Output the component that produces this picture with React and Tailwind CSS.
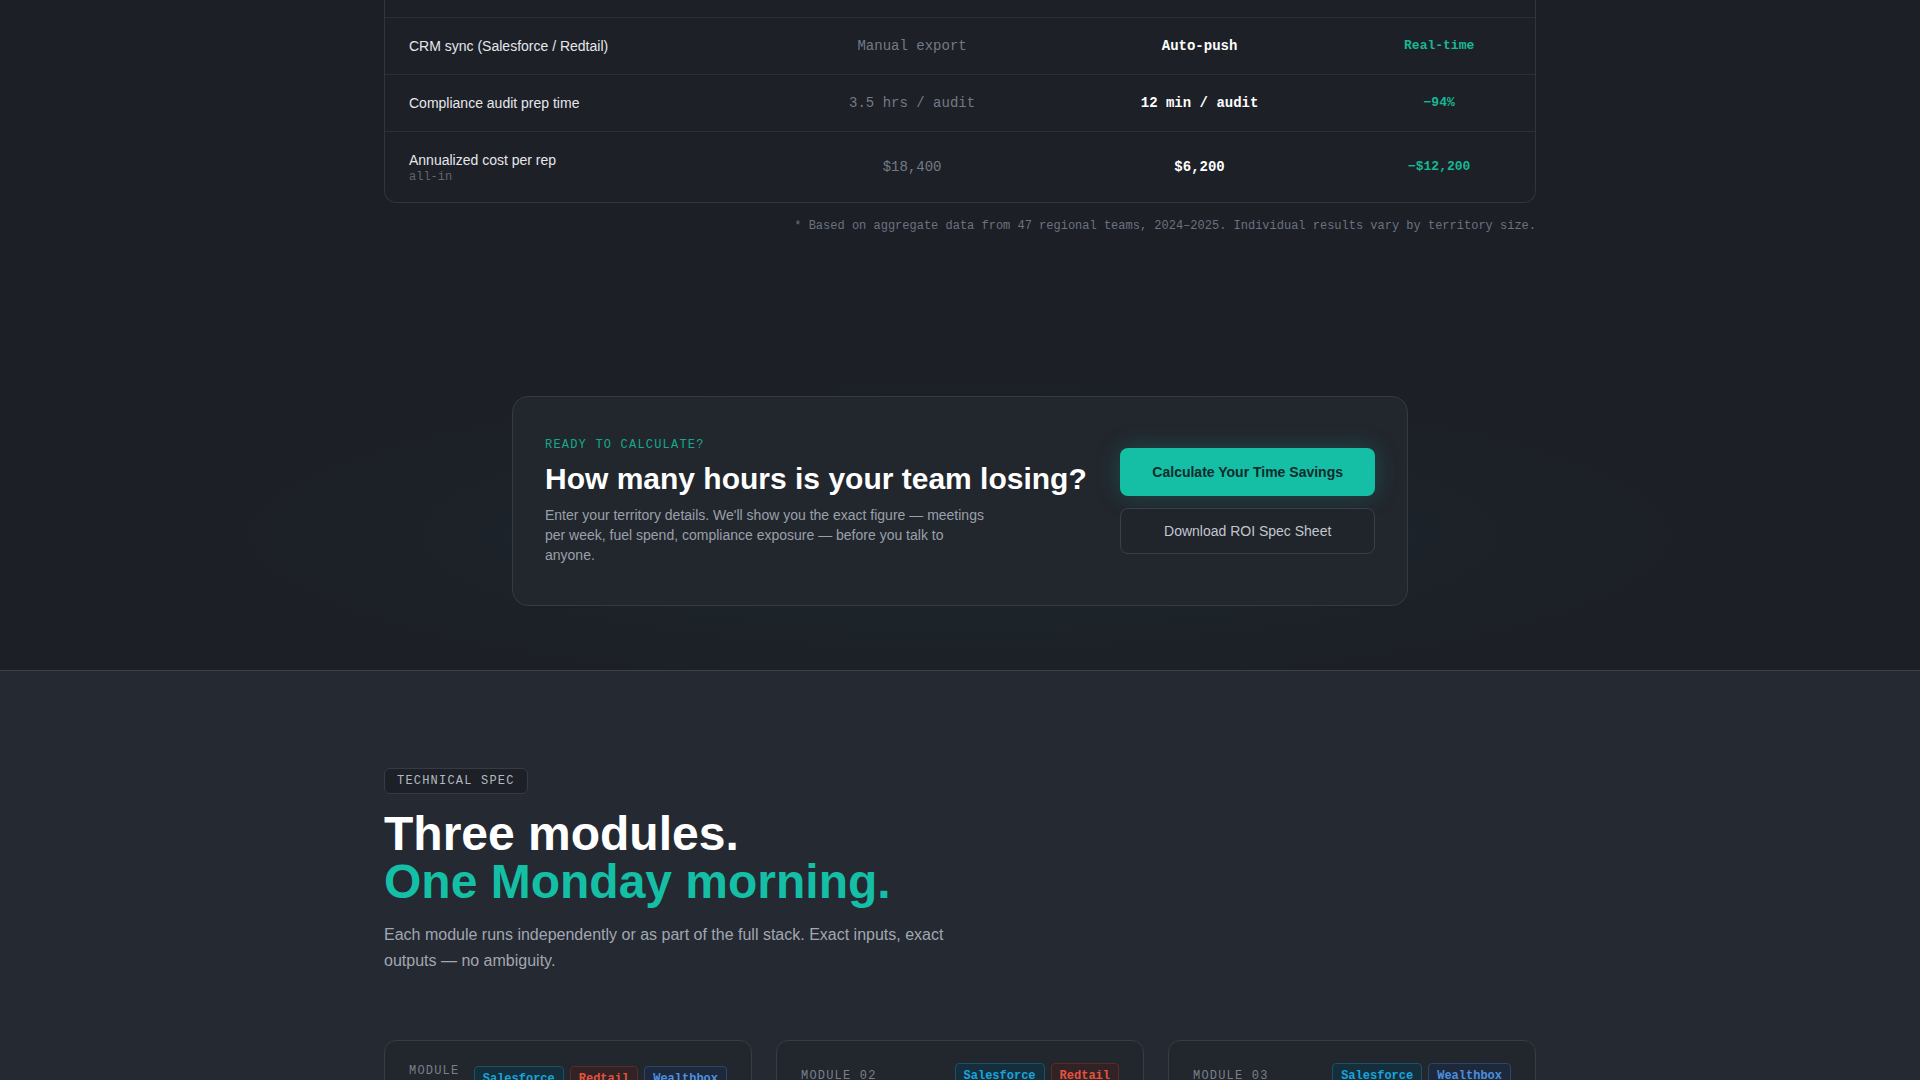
import React from 'react'

const ROWS = [
  { label: 'CRM sync (Salesforce / Redtail)', before: 'Manual export', after: 'Auto-push', delta: 'Real-time' },
  { label: 'Compliance audit prep time', before: '3.5 hrs / audit', after: '12 min / audit', delta: '−94%' },
  { label: 'Annualized cost per rep', sub: 'all-in', before: '$18,400', after: '$6,200', delta: '−$12,200' },
]

const TAGS = {
  Salesforce: 'text-[#1aa3dc] bg-[#0e3345]/60 border-[#1a5068]',
  Redtail: 'text-[#e5533d] bg-[#3a1f1f]/60 border-[#5e2a28]',
  Wealthbox: 'text-[#4d8fe0] bg-[#1b2b44]/60 border-[#2c466b]',
}

const MODULES = [
  { num: '01', tags: ['Salesforce', 'Redtail', 'Wealthbox'], title: 'Route Optimizer', desc: 'Clusters appointments by geography and drive time.' },
  { num: '02', tags: ['Salesforce', 'Redtail'], title: 'Meeting Scheduler', desc: 'Books client meetings into optimized route windows.' },
  { num: '03', tags: ['Salesforce', 'Wealthbox'], title: 'Compliance Logger', desc: 'Writes every touchpoint to an audit-ready record.' },
]

export default function App() {
  return (
    <div className="min-h-screen bg-[#1c1f26] font-['Liberation_Sans',Arial,sans-serif] text-gray-200">
      {/* Comparison table (scrolled) */}
      <section className="pb-[98px]">
        <div className="max-w-6xl mx-auto">
          <div className="border-x border-b border-[#31353e] rounded-b-xl bg-[#1d2027] overflow-hidden">
            <div className="h-[17px]" />
            {ROWS.map(r => (
              <div key={r.label} className="grid grid-cols-[4fr_3fr_3fr_2fr] items-center border-t border-[#2a2e36] py-[18px]">
                <div className="pl-6">
                  <p className="text-sm leading-5 text-gray-200">{r.label}</p>
                  {r.sub && <p className="font-['Liberation_Mono',monospace] text-xs leading-[14px] text-[#5f6672]">{r.sub}</p>}
                </div>
                <div className="text-center font-['Liberation_Mono',monospace] text-sm leading-5 text-[#737a86]">{r.before}</div>
                <div className="text-center font-['Liberation_Mono',monospace] text-sm leading-5 font-bold text-white">{r.after}</div>
                <div className="text-center font-['Liberation_Mono',monospace] text-[13px] leading-5 font-bold text-[#16b894]">{r.delta}</div>
              </div>
            ))}
          </div>
          <p className="mt-[15px] text-right font-['Liberation_Mono',monospace] text-xs leading-4 text-[#6b7280]">
            * Based on aggregate data from 47 regional teams, 2024–2025. Individual results vary by territory size.
          </p>
        </div>
      </section>

      {/* CTA */}
      <section className="py-16 bg-[radial-gradient(ellipse_at_50%_60%,rgba(20,184,166,0.05),transparent_55%)]">
        <div className="max-w-4xl mx-auto flex items-center justify-between gap-8 rounded-2xl border border-[#353a44] bg-[#22262d] px-8 py-10">
          <div>
            <p className="font-['Liberation_Mono',monospace] text-xs leading-4 tracking-widest text-[#17a88c]">READY TO CALCULATE?</p>
            <h2 className="mt-2 text-3xl font-bold text-white">How many hours is your team losing?</h2>
            <p className="mt-2 max-w-md text-sm leading-5 text-[#9aa0aa]">
              Enter your territory details. We'll show you the exact figure — meetings per week, fuel spend, compliance exposure — before you talk to anyone.
            </p>
          </div>
          <div className="flex flex-col gap-3 shrink-0">
            <button className="rounded-lg bg-[#14bfa6] px-8 py-3.5 text-sm font-bold leading-5 text-[#0f2b2a] shadow-[0_0_24px_rgba(20,191,166,0.25)]">
              Calculate Your Time Savings
            </button>
            <button className="rounded-lg border border-[#3a3f49] bg-[#20242b] px-8 py-3 text-sm leading-5 text-[#c2c7cf]">
              Download ROI Spec Sheet
            </button>
          </div>
        </div>
      </section>

      {/* Technical spec */}
      <section className="border-t border-[#3b404b] bg-[#252932] pt-24 pb-24">
        <div className="max-w-6xl mx-auto">
          <span className="inline-block rounded-md border border-[#363b45] bg-[#1d2027] px-3 py-1 font-['Liberation_Mono',monospace] text-xs leading-4 tracking-widest text-[#b3b8c0]">
            TECHNICAL SPEC
          </span>
          <h2 className="mt-4 text-5xl font-bold leading-none">
            <span className="block text-white">Three modules.</span>
            <span className="block text-[#14bfa6]">One Monday morning.</span>
          </h2>
          <p className="mt-4 max-w-xl text-base leading-relaxed text-[#a1a7b0]">
            Each module runs independently or as part of the full stack. Exact inputs, exact outputs — no ambiguity.
          </p>

          <div className="mt-[66px] grid grid-cols-3 gap-6">
            {MODULES.map(m => (
              <div key={m.num} className="rounded-xl border border-[#363b45] bg-[#22262d] px-6 pt-[22px] pb-6">
                <div className="flex items-center justify-between gap-3">
                  <span className="font-['Liberation_Mono',monospace] text-xs leading-4 tracking-widest text-[#7a808b]">MODULE {m.num}</span>
                  <div className="flex gap-1.5 shrink-0">
                    {m.tags.map(t => (
                      <span key={t} className={`rounded border px-2 py-1 font-['Liberation_Mono',monospace] text-xs font-bold leading-4 ${TAGS[t]}`}>{t}</span>
                    ))}
                  </div>
                </div>
                <h3 className="mt-6 text-xl font-bold text-white">{m.title}</h3>
                <p className="mt-2 text-sm leading-5 text-[#9aa0aa]">{m.desc}</p>
              </div>
            ))}
          </div>
        </div>
      </section>
    </div>
  )
}
